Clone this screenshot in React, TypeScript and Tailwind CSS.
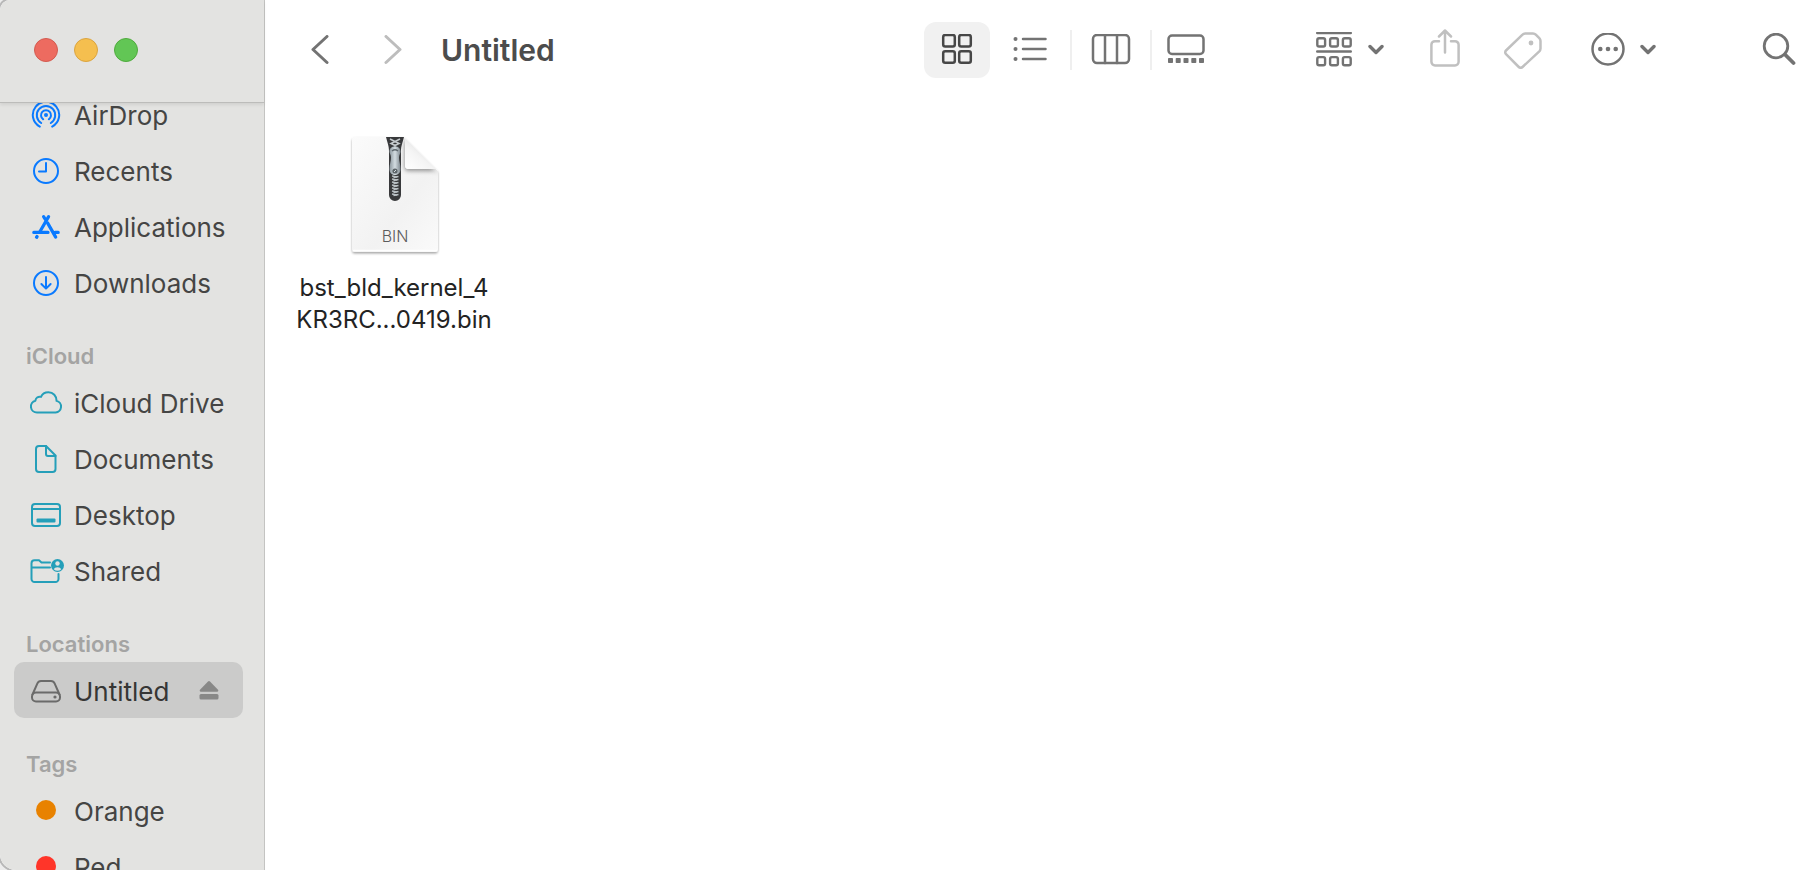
import type { ReactNode } from "react";

type Item = { label: string; icon: ReactNode; active?: boolean; ejectable?: boolean };
type Section = { title: string; items: Item[] };

// ---- sidebar icons ----

function SideIcon({ color, children }: { color: string; children: ReactNode }) {
  return (
    <svg
      viewBox="0 0 36 32"
      className={`h-8 w-9 shrink-0 ${color}`}
      fill="none"
      stroke="currentColor"
      strokeWidth="2"
      strokeLinecap="round"
      strokeLinejoin="round"
      aria-hidden="true"
    >
      {children}
    </svg>
  );
}

const BLUE = "text-[#0a7aff]";
const TEAL = "text-[#259fb9]";

const airdrop = (
  <SideIcon color={BLUE}>
    <circle cx="18" cy="17" r="2" fill="currentColor" stroke="none" />
    <path d="M15.2 21.3a5 5 0 1 1 5.6 0" />
    <path d="M13.2 25a9.2 9.2 0 1 1 9.6 0" />
    <path d="M11.8 28.6a13.2 13.2 0 1 1 12.4 0" />
  </SideIcon>
);

const recents = (
  <SideIcon color={BLUE}>
    <circle cx="18" cy="17" r="12" />
    <path d="M18 9v8.5h-7" />
  </SideIcon>
);

const applications = (
  <SideIcon color={BLUE}>
    <path d="M15.6 6.6L18 10.500M20.600 6.600L12 21.500" strokeWidth="3.2" />
    <path d="M19.600 13L27.600 27" strokeWidth="3.4" />
    <path d="M5.800 22.400h14.200M27 22.400h3.200" strokeWidth="3.2" />
    <path d="M8.600 27.200l.4-.6" strokeWidth="3.4" />
  </SideIcon>
);

const downloads = (
  <SideIcon color={BLUE}>
    <circle cx="18" cy="17" r="12" />
    <path d="M18 11v11.4M13.4 18l4.6 4.6 4.6-4.6" />
  </SideIcon>
);

const cloud = (
  <SideIcon color={TEAL}>
    <path d="M9 26.500a6 6 0 0 1-1.600-11.800c.2-2.600 2.600-4.600 5.600-3.800C14.200 8 17.200 6.300 20.400 6.300c4.800 0 8.200 3.600 8.200 8.600A5.900 5.900 0 0 1 27.600 26.500z" />
  </SideIcon>
);

const documents = (
  <SideIcon color={TEAL}>
    <path d="M8 7a3 3 0 0 1 3-3h7l9.500 9.500V27a3 3 0 0 1-3 3H11a3 3 0 0 1-3-3z" />
    <path d="M18 4v8a2 2 0 0 0 2 2h7.500" />
  </SideIcon>
);

const desktop = (
  <SideIcon color={TEAL}>
    <rect x="4" y="6" width="28" height="22" rx="3" />
    <path d="M4 11h28" />
    <rect x="8.500" y="20.500" width="19" height="4" rx="1" fill="currentColor" stroke="none" />
  </SideIcon>
);

const shared = (
  <SideIcon color={TEAL}>
    <path d="M22 8.500h-8.500L11 6.200H6.500a3 3 0 0 0-3 3V25a3 3 0 0 0 3 3H27.500a3 3 0 0 0 3-3v-5M3.500 13.500h18.500" />
    <circle cx="29.500" cy="11.500" r="6.500" fill="currentColor" stroke="none" />
    <circle cx="29.500" cy="9.500" r="2.200" fill="#e3e3e1" stroke="none" />
    <path d="M25.700 15.200a4 3 0 0 1 7.600 0 6 6 0 0 1-7.600 0z" fill="#e3e3e1" stroke="none" />
  </SideIcon>
);

const drive = (
  <SideIcon color="text-[#6b6b6a]">
    <path d="M4.500 20.500L9.400 9.400A4 4 0 0 1 13 7h10a4 4 0 0 1 3.600 2.400l4.900 11.100" />
    <rect x="4" y="18.500" width="28" height="9" rx="4" />
    <circle cx="27" cy="23" r="1.600" fill="currentColor" stroke="none" />
  </SideIcon>
);

function TagDot({ color }: { color: string }) {
  return (
    <span className="flex h-8 w-9 shrink-0 items-center justify-center">
      <span className={`size-5 rounded-full ${color}`} />
    </span>
  );
}

const favorites: Item[] = [
  { label: "AirDrop", icon: airdrop },
  { label: "Recents", icon: recents },
  { label: "Applications", icon: applications },
  { label: "Downloads", icon: downloads },
];

const sections: Section[] = [
  {
    title: "iCloud",
    items: [
      { label: "iCloud Drive", icon: cloud },
      { label: "Documents", icon: documents },
      { label: "Desktop", icon: desktop },
      { label: "Shared", icon: shared },
    ],
  },
  {
    title: "Locations",
    items: [{ label: "Untitled", icon: drive, active: true, ejectable: true }],
  },
  {
    title: "Tags",
    items: [
      { label: "Orange", icon: <TagDot color="bg-[#e88200]" /> },
      { label: "Red", icon: <TagDot color="bg-[#ff3529]" /> },
    ],
  },
];

function ItemList({ items }: { items: Item[] }) {
  return (
    <ul className="pr-[21px] pl-[14px]">
      {items.map((item) => (
        <li
          key={item.label}
          className={`flex h-14 items-center rounded-[10px] pr-6 ${
            item.active ? "bg-[#cbcbca] text-[#363635]" : "text-[#454544]"
          }`}
        >
          <a
            href="#"
            className="flex h-full flex-1 items-center gap-[10px] pl-[14px] text-[26px] whitespace-nowrap"
          >
            {item.icon}
            <span className="pt-[2px]">{item.label}</span>
          </a>
          {item.ejectable && (
            <button type="button" aria-label={`Eject ${item.label}`} className="text-[#888887]">
              <svg viewBox="0 0 20 20" className="size-5" fill="currentColor" aria-hidden="true">
                <path d="M9 1.500a1.400 1.400 0 0 1 2 0l8 8.300c.7.800.3 2-.8 2H1.800c-1.100 0-1.500-1.200-.8-2z" />
                <rect x="0.500" y="14" width="19" height="5.500" rx="1.500" />
              </svg>
            </button>
          )}
        </li>
      ))}
    </ul>
  );
}

function Sidebar() {
  return (
    <aside className="flex w-[265px] shrink-0 flex-col border-r border-[#c4c4c2] bg-[#e3e3e1]">
      <div className="z-10 flex h-[103px] shrink-0 items-start gap-4 border-b border-[#bcbcba] pt-[38px] pl-[34px] shadow-[0_2px_3px_rgba(0,0,0,0.08)]">
        <button type="button" aria-label="Close" className="size-6 rounded-full border border-[#d35b50] bg-[#ed6b60]" />
        <button type="button" aria-label="Minimize" className="size-6 rounded-full border border-[#dba43f] bg-[#f5bf4f]" />
        <button type="button" aria-label="Zoom" className="size-6 rounded-full border border-[#4fab3d] bg-[#62c655]" />
      </div>
      {/* list is scrolled a little, first row sits under the header */}
      <nav className="min-h-0 flex-1 overflow-hidden">
        <div className="-mt-[17px]">
          <ItemList items={favorites} />
          {sections.map((s) => (
            <section key={s.title}>
              <h2 className="flex h-16 items-end pb-[3px] pl-[26px] text-[22px] leading-[30px] font-semibold text-[#a4a4a3]">
                {s.title}
              </h2>
              <ItemList items={s.items} />
            </section>
          ))}
        </div>
      </nav>
    </aside>
  );
}

// ---- toolbar ----

function ToolIcon({
  box,
  className,
  width = 2.5,
  children,
}: {
  box: string;
  className: string;
  width?: number;
  children: ReactNode;
}) {
  return (
    <svg
      viewBox={box}
      className={`shrink-0 ${className}`}
      fill="none"
      stroke="currentColor"
      strokeWidth={width}
      strokeLinecap="round"
      strokeLinejoin="round"
      aria-hidden="true"
    >
      {children}
    </svg>
  );
}

function Chevron() {
  return (
    <ToolIcon box="0 0 16 12" className="h-3 w-4" width={3.4}>
      <path d="M2 2.500l6 6 6-6" />
    </ToolIcon>
  );
}

function Toolbar() {
  return (
    <header className="flex h-[100px] shrink-0 items-center pr-6 pl-[46px] text-[#737373]">
      <button type="button" aria-label="Back">
        <ToolIcon box="0 0 18 30" className="h-[30px] w-[18px]" width={3}>
          <path d="M16 1.500L2 14.500l14 13" />
        </ToolIcon>
      </button>
      <button type="button" aria-label="Forward" className="ml-[55px] text-[#bdbdbd]">
        <ToolIcon box="0 0 18 30" className="h-[30px] w-[18px]" width={3}>
          <path d="M2 1.500l14 13-14 13" />
        </ToolIcon>
      </button>
      <h1 className="ml-[39px] text-[30px] font-semibold text-[#4c4c4c]">Untitled</h1>

      <div className="ml-auto flex items-center">
        <button
          type="button"
          aria-label="Icon view"
          aria-pressed="true"
          className="flex h-14 w-[66px] items-center justify-center rounded-xl bg-[#f1f1f1] text-[#474747]"
        >
          <ToolIcon box="0 0 32 32" className="size-8">
            <rect x="2.200" y="1" width="11.600" height="11.600" rx="2" />
            <rect x="18.200" y="1" width="11.600" height="11.600" rx="2" />
            <rect x="2.200" y="17.200" width="11.600" height="11.600" rx="2" />
            <rect x="18.200" y="17.200" width="11.600" height="11.600" rx="2" />
          </ToolIcon>
        </button>
        <button type="button" aria-label="List view" className="flex h-14 w-20 items-center justify-center">
          <ToolIcon box="0 0 34 26" className="h-[26px] w-[34px]">
            <path d="M10 2h22.500M10 12h22.500M10 22h22.500" />
            <g fill="currentColor" stroke="none">
              <circle cx="2.500" cy="2" r="2" />
              <circle cx="2.500" cy="12" r="2" />
              <circle cx="2.500" cy="22" r="2" />
            </g>
          </ToolIcon>
        </button>
        <span className="h-10 w-[2px] bg-[#efefef]" />
        <button type="button" aria-label="Column view" className="flex h-14 w-[78px] items-center justify-center">
          <ToolIcon box="0 0 40 32" className="h-8 w-10">
            <rect x="2" y="1" width="36" height="28" rx="4" />
            <path d="M14 1.500v27.500M26 1.500v27.500" />
          </ToolIcon>
        </button>
        <span className="h-10 w-[2px] bg-[#efefef]" />
        <button type="button" aria-label="Gallery view" className="flex h-14 w-[68px] items-center justify-center">
          <ToolIcon box="0 0 40 32" className="h-8 w-10">
            <rect x="2.500" y="1.500" width="35" height="18.500" rx="3.500" />
            <g fill="currentColor" stroke="none">
              <rect x="2" y="24" width="5" height="5" rx="0.800" />
              <rect x="9.700" y="24" width="5" height="5" rx="0.800" />
              <rect x="17.500" y="24" width="5" height="5" rx="0.800" />
              <rect x="25.300" y="24" width="5" height="5" rx="0.800" />
              <rect x="33" y="24" width="5" height="5" rx="0.800" />
            </g>
          </ToolIcon>
        </button>
      </div>

      <button type="button" aria-label="Group" className="ml-24 flex items-center gap-4">
        <ToolIcon box="0 0 36 36" className="size-9" width={2.4}>
          <path d="M1.200 1h33.600M1.200 19.500h33.600" />
          <rect x="1.300" y="6.300" width="7.800" height="8.200" rx="1.800" />
          <rect x="14.100" y="6.300" width="7.800" height="8.200" rx="1.800" />
          <rect x="26.900" y="6.300" width="7.800" height="8.200" rx="1.800" />
          <rect x="1.300" y="25.100" width="7.800" height="8.200" rx="1.800" />
          <rect x="14.100" y="25.100" width="7.800" height="8.200" rx="1.800" />
          <rect x="26.900" y="25.100" width="7.800" height="8.200" rx="1.800" />
        </ToolIcon>
        <Chevron />
      </button>
      <button type="button" aria-label="Share" className="ml-[46px] text-[#c0c0c0]">
        <ToolIcon box="0 0 30 42" className="h-[42px] w-[30px]">
          <path d="M9 12.200H5a3.600 3.600 0 0 0-3.600 3.600v17A3.600 3.600 0 0 0 5 36.400h20a3.600 3.600 0 0 0 3.600-3.600v-17A3.600 3.600 0 0 0 25 12.200h-4" />
          <path d="M15 23.500V2M9 7.500L15 1.500l6 6" />
        </ToolIcon>
      </button>
      <button type="button" aria-label="Tags" className="ml-11 text-[#c0c0c0]">
        <ToolIcon box="0 0 38 38" className="size-[38px]">
          <path d="M2 19.500L18.500 3.700a4 4 0 0 1 2.700-1.200H29a4 4 0 0 1 2.800 1.200l3.500 3.500A4 4 0 0 1 36.500 10v7.500a4 4 0 0 1-1.200 2.800L18.500 36a2.600 2.600 0 0 1-3.700 0L2 23.200a2.600 2.600 0 0 1 0-3.700z" />
          <circle cx="27" cy="12" r="2.400" fill="currentColor" stroke="none" />
        </ToolIcon>
      </button>
      <button type="button" aria-label="More" className="ml-[49px] flex items-center gap-[15px]">
        <ToolIcon box="0 0 34 34" className="size-[34px]">
          <circle cx="17" cy="16" r="15.500" />
          <g fill="currentColor" stroke="none">
            <circle cx="9.300" cy="16" r="2.300" />
            <circle cx="17" cy="16" r="2.300" />
            <circle cx="24.700" cy="16" r="2.300" />
          </g>
        </ToolIcon>
        <Chevron />
      </button>
      <button type="button" aria-label="Search" className="ml-[106px]">
        <ToolIcon box="0 0 34 34" className="size-[34px]" width={2.8}>
          <circle cx="14" cy="13" r="11.800" />
          <path d="M23 21.500l8.500 8.500" strokeWidth="3.800" />
        </ToolIcon>
      </button>
    </header>
  );
}

// ---- file ----

function ZipIcon() {
  const teeth = [0, 1, 2, 3, 4, 5, 6];
  return (
    <svg viewBox="-1 0 96 124" className="h-[124px] w-24" aria-hidden="true">
      <defs>
        <linearGradient id="page" x1="0" y1="0" x2="1" y2="1">
          <stop offset="0" stopColor="#fbfbfb" />
          <stop offset="0.600" stopColor="#f2f2f2" />
          <stop offset="1" stopColor="#fafafa" />
        </linearGradient>
        <linearGradient id="fold" x1="0" y1="1" x2="0.600" y2="0.300">
          <stop offset="0" stopColor="#ffffff" />
          <stop offset="0.600" stopColor="#f4f4f4" />
          <stop offset="1" stopColor="#e2e2e2" />
        </linearGradient>
        <linearGradient id="metal" x1="0" y1="0" x2="1" y2="0">
          <stop offset="0" stopColor="#8c979e" />
          <stop offset="0.500" stopColor="#d3dce1" />
          <stop offset="1" stopColor="#7f8990" />
        </linearGradient>
        <filter id="drop" x="-10%" y="-10%" width="120%" height="120%">
          <feDropShadow dx="0" dy="1.500" stdDeviation="1" floodOpacity="0.350" />
        </filter>
        <filter id="soft" x="-30%" y="-30%" width="160%" height="160%">
          <feDropShadow dx="-0.500" dy="2" stdDeviation="2.200" floodOpacity="0.400" />
        </filter>
        <clipPath id="cut">
          <path d="M5 7a3 3 0 0 1 3-3h49l34 34v78a3 3 0 0 1-3 3H8a3 3 0 0 1-3-3z" />
        </clipPath>
      </defs>
      <path
        d="M5 7a3 3 0 0 1 3-3h49l34 34v78a3 3 0 0 1-3 3H8a3 3 0 0 1-3-3z"
        fill="url(#page)"
        filter="url(#drop)"
      />
      <path d="M6 117.500h84" stroke="#ffffff" strokeWidth="1.500" />
      <g clipPath="url(#cut)">
        <path d="M58 4v28a4 4 0 0 0 4 4h29V38z" fill="#ffffff" filter="url(#soft)" />
        <path d="M58 4v28a4 4 0 0 0 4 4h29z" fill="url(#fold)" />
      </g>
      <path d="M39 4h18c-1.500 6-3 9-3 14v44a6 6 0 0 1-12 0V18c0-5-1.500-8-3-14z" fill="#38393b" />
      <path d="M43 6l5 2.500-4 2 5 2.500M53 6l-5 2.500 4 2-5 2.500" fill="none" stroke="#c3c9cc" strokeWidth="1.600" />
      {teeth.map((i) => (
        <g key={i} stroke="#b9c0c4" strokeWidth="1.400">
          <path d={`M45 ${43 + i * 3}l5 1`} />
          <path d={`M46.500 ${44.5 + i * 3}l5-1`} />
        </g>
      ))}
      <path
        d="M48 13.500c-3.500 0-5.500 2-5.500 5 0 2.500 1.500 3 1.500 6 0 4-1.500 7-1.500 11.500 0 3.500 2 6 5.500 6s5.500-2.500 5.500-6c0-4.500-1.500-7.500-1.500-11.500 0-3 1.500-3.500 1.500-6 0-3-2-5-5.500-5z"
        fill="url(#metal)"
      />
      <path d="M45 18q3-2.500 6 0" stroke="#5f686e" strokeWidth="1.400" fill="none" />
      <circle cx="48" cy="38" r="2.600" fill="#5c6469" />
      <path d="M47 39l2-2" stroke="#d3dce1" strokeWidth="1" />
      <text
        x="48"
        y="109"
        textAnchor="middle"
        fontSize="16"
        fontWeight="300"
        fill="#5c5c5c"
        fontFamily="Inter, sans-serif"
      >
        BIN
      </text>
    </svg>
  );
}

function FileTile() {
  return (
    <button type="button" className="flex w-[208px] flex-col items-center gap-[15px] text-[#232323]">
      <ZipIcon />
      <span className="text-center text-[24px] leading-8">
        bst_bld_kernel_4
        <br />
        KR3RC...0419.bin
      </span>
    </button>
  );
}

export default function App() {
  return (
    <div className="h-screen overflow-hidden bg-[#ececec] font-['Inter','Liberation_Sans',sans-serif]">
      <div className="flex h-full overflow-hidden rounded-tl-[10px] rounded-bl-2xl bg-white shadow-[0_0_0_2px_#b8b8b8]">
        <Sidebar />
        <div className="flex min-w-0 flex-1 flex-col">
          <Toolbar />
          <main className="flex flex-1 flex-wrap content-start px-[25px] pt-[33px]">
            <FileTile />
          </main>
        </div>
      </div>
    </div>
  );
}
